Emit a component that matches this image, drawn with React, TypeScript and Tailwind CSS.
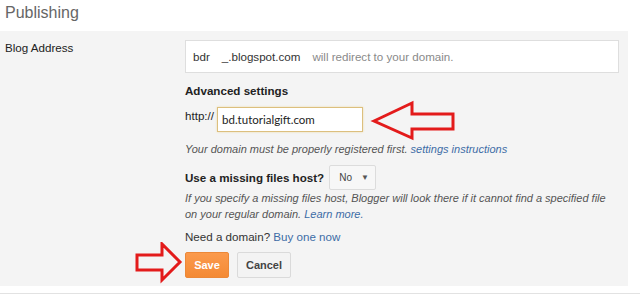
import React from "react";

const font = { fontFamily: '"Liberation Sans", Arial, sans-serif' };

export default function App() {
  return (
    <div className="relative w-[640px] h-[298px] bg-white overflow-hidden" style={font}>
      <div className="h-[31px] pl-[5px] pt-[3px] text-[16px] leading-[20px] text-[#666]">Publishing</div>
      <div className="flex w-[628px] h-[255px] bg-[#f4f4f4]">
        <div className="w-[185px] pl-[5px] pt-[9px] text-[11.6px] leading-[16px] text-[#222]">Blog Address</div>
        <div className="flex flex-col pt-[9px]">
          <div className="flex items-center w-[434px] h-[33px] bg-white border border-[#dedede] pl-[7px] text-[11.6px] text-[#333]">
            <span>bdr</span>
            <span className="ml-[12px]">_.blogspot.com</span>
            <span className="ml-[12px] text-[#8a8a8a]">will redirect to your domain.</span>
          </div>
          <div className="mt-[10px] text-[11.6px] leading-[16px] font-bold text-[#222]">Advanced settings</div>
          <div className="mt-[8px] flex items-start">
            <span className="pt-[1px] text-[11.6px] leading-[16px] text-[#222]">http://</span>
            <div
              className="ml-[3px] w-[146px] h-[25px] flex items-center bg-white border border-[#dcbf7e] shadow-[0_0_2px_#f0dca8] pl-[4px] text-[11.5px] text-[#222]"
              style={{ fontFamily: 'Lato, "Open Sans", sans-serif' }}
            >
              bd.tutorialgift.com
            </div>
          </div>
          <div className="mt-[9px] text-[11px] leading-[16px] italic text-[#555]">
            Your domain must be properly registered first.{" "}
            <span className="text-[#3d6ca6]">settings instructions</span>
          </div>
          <div className="mt-[8px] flex items-center h-[25px]">
            <span className="text-[11.6px] leading-[16px] font-bold text-[#222]">Use a missing files host?</span>
            <div className="ml-[5px] w-[47px] h-[25px] flex items-center bg-[#f7f7f7] border border-[#dcdcdc] rounded-[2px] pl-[9px] text-[10px] text-[#444]">
              <span>No</span>
              <span className="ml-[9px] text-[8px] text-[#555]">▼</span>
            </div>
          </div>
          <div className="text-[11px] leading-[16px] italic text-[#555]">
            If you specify a missing files host, Blogger will look there if it cannot find a specified file
          </div>
          <div className="text-[11px] leading-[16px] italic text-[#555]">
            on your regular domain. <span className="text-[#3d6ca6]">Learn more.</span>
          </div>
          <div className="mt-[6.5px] text-[11.6px] leading-[16px] text-[#333]">
            Need a domain? <span className="text-[#3d6ca6]">Buy one now</span>
          </div>
          <div className="mt-[7.5px] flex gap-[8px]">
            <div className="w-[44px] h-[26px] flex items-center justify-center rounded-[2px] border border-[#ec8838] bg-gradient-to-b from-[#fb9a4c] to-[#f48a34] text-white text-[11px] font-bold">
              Save
            </div>
            <div className="w-[54px] h-[26px] flex items-center justify-center rounded-[2px] border border-[#dadada] bg-[#f3f3f3] text-[#444] text-[11px] font-bold">
              Cancel
            </div>
          </div>
        </div>
      </div>
      <div className="h-[7px]" />
      <div className="h-[1px] bg-[#e2e2e2]" />

      <svg className="absolute left-[370px] top-[100px]" width="90" height="42" viewBox="0 0 90 42">
        <polygon
          points="4,21 42,3 42,14 83,14 83,29 42,29 42,38"
          fill="none"
          stroke="#e31b1b"
          strokeWidth="3"
          strokeLinejoin="miter"
        />
      </svg>
      <svg className="absolute left-[135px] top-[242px]" width="50" height="42" viewBox="0 0 50 42">
        <polygon
          points="2,13 27,13 27,2 45,20 27,38 27,28 2,28"
          fill="none"
          stroke="#e31b1b"
          strokeWidth="3"
          strokeLinejoin="miter"
        />
      </svg>
    </div>
  );
}
